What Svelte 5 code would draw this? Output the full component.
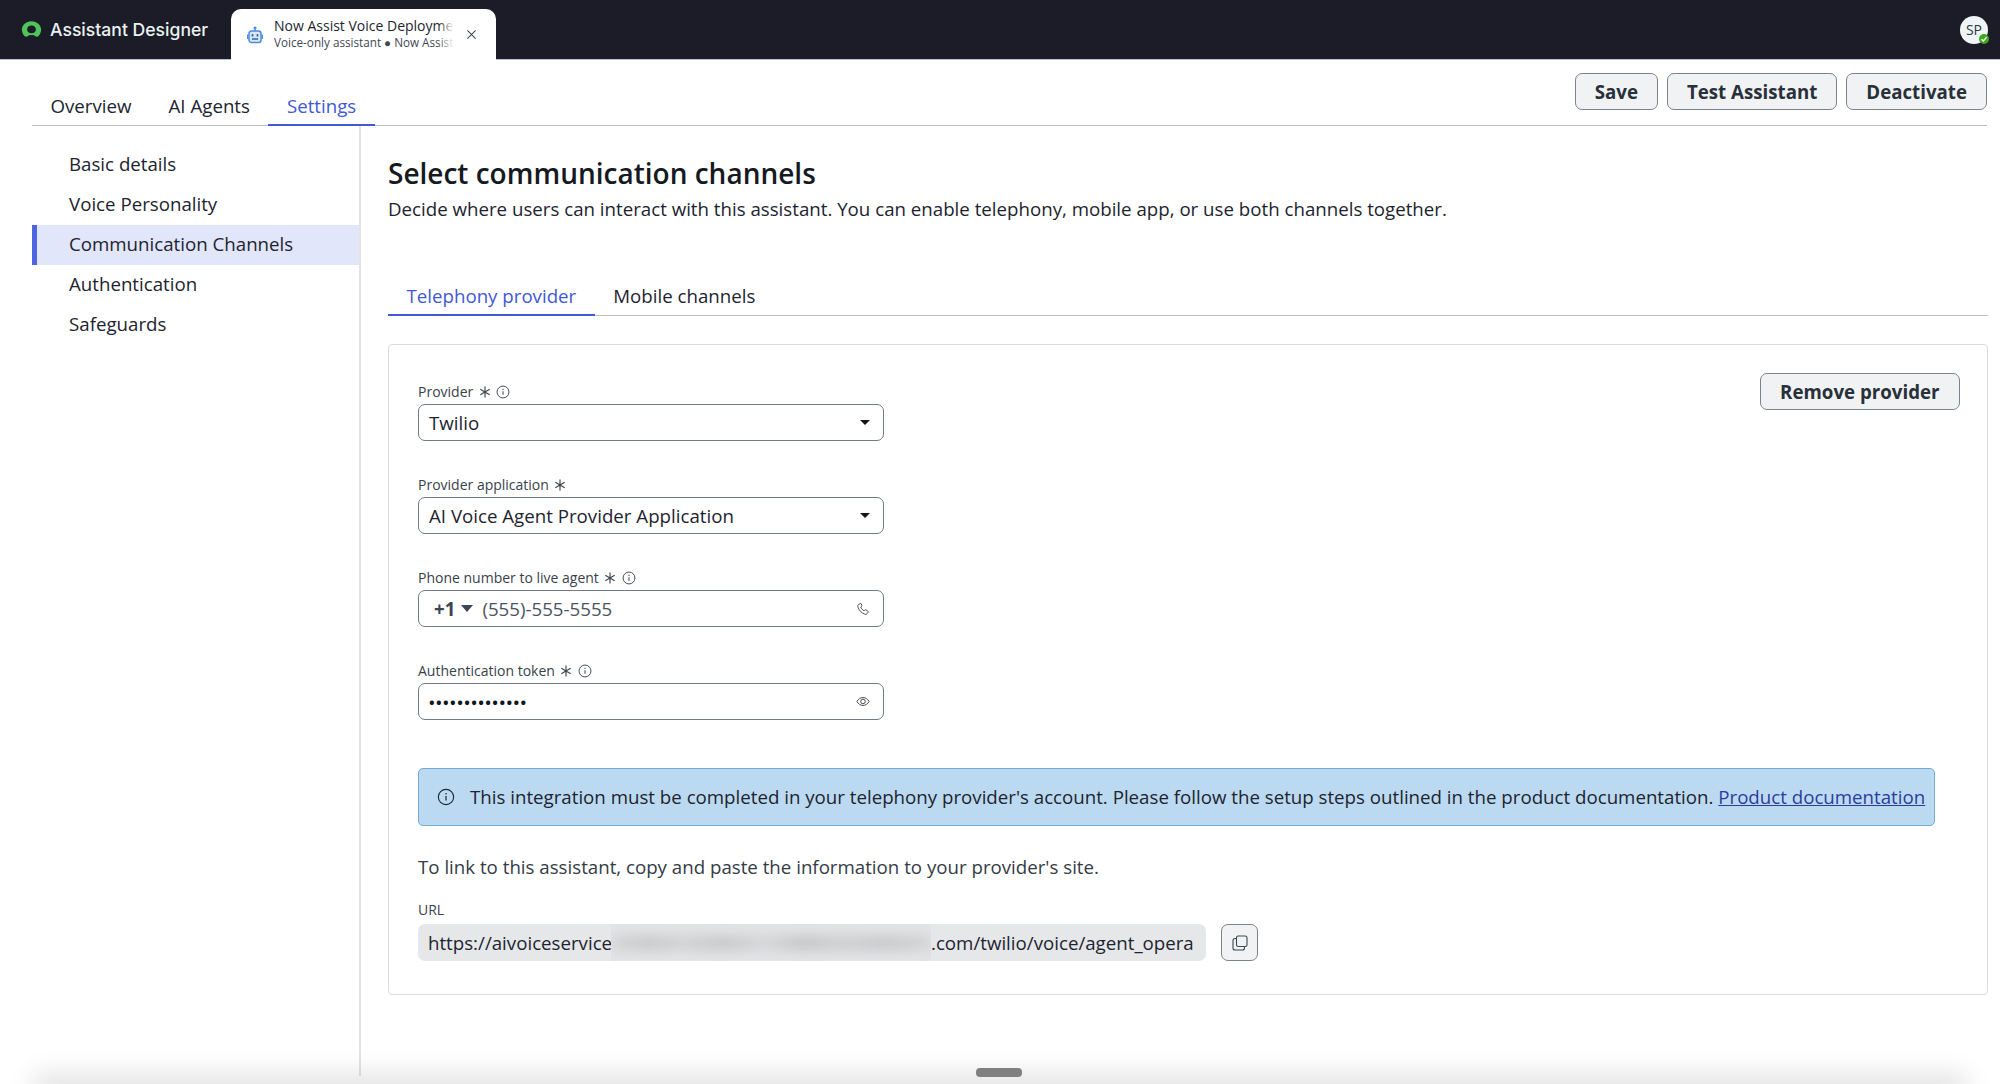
<script>
  const navItems = ['Basic details', 'Voice Personality', 'Communication Channels', 'Authentication', 'Safeguards'];
</script>

{#snippet star()}
  <svg class="req" viewBox="0 0 12 12"><path d="M6 .6v10.800M1.300 3.300l9.400 5.400M10.700 3.300l-9.400 5.400" fill="none" stroke="currentColor" stroke-width="1.150"/></svg>
{/snippet}
{#snippet info()}
  <svg class="info" viewBox="0 0 16 16"><circle cx="8" cy="8" r="6.800" fill="none" stroke="currentColor" stroke-width="1.100"/><path d="M8 7v4.200M8 4.400v1.300" stroke="currentColor" stroke-width="1.200"/></svg>
{/snippet}

<div class="page">
  <header class="topbar">
    <div class="brand">
      <svg class="logo" viewBox="0 0 24 24" width="21" height="19" preserveAspectRatio="none"><path fill="#52c25a" fill-rule="evenodd" d="M12 1.500C5.800 1.500 1 6.200 1 12.200c0 3.100 1.300 6.200 3.300 8.300.7.700 1.700.800 2.600.200 1.500-1.100 3.200-1.700 5.100-1.700s3.600.600 5.100 1.700c.8.600 1.900.500 2.600-.2 2-2.100 3.300-5.100 3.300-8.300C23 6.200 18.200 1.500 12 1.500zm0 15.300c-2.900 0-5-2.100-5-4.900S9.100 7 12 7s5 2.100 5 4.900-2.100 4.900-5 4.900z"/></svg>
      <span>Assistant Designer</span>
    </div>
    <div class="apptab">
      <svg class="bot" viewBox="0 0 18 20" width="16" height="18"><circle cx="9" cy="2" r="1.700" fill="#4a8be0"/><rect x="8.300" y="3" width="1.400" height="2.500" fill="#4a8be0"/><rect x="2.200" y="5.500" width="13.600" height="13" rx="3" fill="#d7e6fa" stroke="#4a8be0" stroke-width="1.700"/><rect x="5.200" y="8.800" width="2" height="3" rx=".8" fill="#35639f"/><rect x="10.800" y="8.800" width="2" height="3" rx=".8" fill="#35639f"/><rect x="5.500" y="13.600" width="7" height="1.800" rx=".6" fill="#35639f"/><rect x="0" y="9.500" width="1.300" height="5" fill="#4a8be0"/><rect x="16.700" y="9.500" width="1.300" height="5" fill="#4a8be0"/></svg>
      <div class="apptab-text">
        <div class="apptab-title">Now Assist Voice Deployment</div>
        <div class="apptab-sub">Voice-only assistant ● Now Assist Voice</div>
        <div class="fade"></div>
      </div>
      <svg class="close" viewBox="0 0 12 12" width="11" height="11"><path d="M1.500 1.500l9 9M10.500 1.500l-9 9" stroke="#3b4450" stroke-width="1.100" fill="none"/></svg>
    </div>
    <div class="spacer"></div>
    <div class="avatar">SP
      <span class="status"><svg viewBox="0 0 10 10" width="10" height="10"><path d="M2.500 5.200l1.800 1.800 3.300-3.700" fill="none" stroke="#fff" stroke-width="1.400"/></svg></span>
    </div>
  </header>

  <div class="subbar">
    <nav class="tabs top">
      <span class="tab">Overview</span>
      <span class="tab">AI Agents</span>
      <span class="tab active">Settings</span>
    </nav>
    <div class="actions">
      <button class="btn">Save</button>
      <button class="btn">Test Assistant</button>
      <button class="btn">Deactivate</button>
    </div>
  </div>

  <div class="body">
    <aside class="side">
      {#each navItems as item}
        <div class="side-item" class:on={item === 'Communication Channels'}>{item}</div>
      {/each}
    </aside>

    <main class="main">
      <h1>Select communication channels</h1>
      <p class="desc">Decide where users can interact with this assistant. You can enable telephony, mobile app, or use both channels together.</p>

      <nav class="tabs inner">
        <span class="tab active">Telephony provider</span>
        <span class="tab">Mobile channels</span>
      </nav>

      <section class="card">
        <div class="card-top">
          <div class="form">
            <div class="field">
              <div class="label">Provider {@render star()} {@render info()}</div>
              <div class="input">
                <span class="grow">Twilio</span>
                <span class="caret"></span>
              </div>
            </div>
            <div class="field">
              <div class="label">Provider application {@render star()}</div>
              <div class="input">
                <span class="grow">AI Voice Agent Provider Application</span>
                <span class="caret"></span>
              </div>
            </div>
            <div class="field">
              <div class="label">Phone number to live agent {@render star()} {@render info()}</div>
              <div class="input phone">
                <b>+1</b><span class="caret grey"></span>
                <span class="grow num">(555)-555-5555</span>
                <svg class="ico" viewBox="0 0 16 16" width="14" height="14"><path d="M4.800 1.800L3 2.800c-1 .7-1.200 2-.6 3.500 1.400 3.500 4 6.200 7.200 7.500 1.300.5 2.500.3 3.200-.6l1-1.500c.3-.4.200-.9-.2-1.200l-2.200-1.500c-.4-.3-.9-.2-1.200.1l-.8.900c-1.700-.7-3.200-2.200-4-4.100l.9-.7c.4-.3.500-.8.300-1.200L6 2.100c-.3-.4-.8-.5-1.200-.3z" fill="none" stroke="#3d4650" stroke-width="1.100"/></svg>
              </div>
            </div>
            <div class="field">
              <div class="label">Authentication token {@render star()} {@render info()}</div>
              <div class="input">
                <span class="grow dots">••••••••••••••</span>
                <svg class="ico" viewBox="0 0 16 12" width="14" height="11"><path d="M1 6c1.800-3 4.200-4.500 7-4.500S13.200 3 15 6c-1.800 3-4.200 4.500-7 4.500S2.800 9 1 6z" fill="none" stroke="#3d4650" stroke-width="1.100"/><circle cx="8" cy="6" r="2.600" fill="none" stroke="#3d4650" stroke-width="1.100"/></svg>
              </div>
            </div>
          </div>
          <button class="btn remove">Remove provider</button>
        </div>

        <div class="alert">
          <svg class="alert-ico" viewBox="0 0 16 16" width="18" height="18"><circle cx="8" cy="8" r="6.800" fill="none" stroke="#1f2730" stroke-width="1"/><path d="M8 7v4.200M8 4.400v1.300" stroke="#1f2730" stroke-width="1.100"/></svg>
          <span class="alert-text">This integration must be completed in your telephony provider's account. Please follow the setup steps outlined in the product documentation. <a href="#doc">Product documentation</a></span>
        </div>

        <p class="link-note">To link to this assistant, copy and paste the information to your provider's site.</p>

        <div class="label url-label">URL</div>
        <div class="url-row">
          <div class="url">
            <span class="url-a">https://aivoiceservice</span>
            <span class="redact"><span class="blur"></span></span>
            <span>.com/twilio/voice/agent_opera</span>
          </div>
          <button class="copy" aria-label="Copy">
            <svg viewBox="0 0 18 18" width="18" height="18"><rect x="5.500" y="2" width="10.500" height="10.500" rx="1.800" fill="none" stroke="#3d4650" stroke-width="1.100"/><path d="M5.500 4.500H4A2 2 0 0 0 2 6.500v7.500a2 2 0 0 0 2 2h7.500a2 2 0 0 0 2-2v-1.500" fill="none" stroke="#3d4650" stroke-width="1.100"/></svg>
          </button>
        </div>
      </section>
    </main>
  </div>

  <div class="bottom-shadow"></div>
  <span class="handle"></span>
</div>

<style>
  :global(body) { margin: 0; background: #fff; }
  .page {
    position: relative;
    width: 2000px;
    height: 1084px;
    overflow: hidden;
    font-family: "Open Sans", "Liberation Sans", sans-serif;
    color: #1a212b;
    background: #fff;
  }
  .topbar {
    height: 60px;
    box-sizing: border-box;
    background: #1b1c28;
    display: flex;
    align-items: flex-end;
    padding-left: 21px;
    padding-right: 12px;
    border-bottom: 1px solid #b4c6d4;
  }
  .brand {
    display: flex;
    align-items: center;
    gap: 8px;
    height: 59px;
    width: 210px;
    color: #e9f2f1;
    font-family: "Inter", "Noto Sans", sans-serif;
    font-size: 17.600px;
    font-weight: 500;
  }
  .logo { flex: none; }
  .apptab {
    width: 265px;
    height: 51px;
    margin-bottom: -1px;
    background: #fff;
    border-radius: 10px 10px 0 0;
    display: flex;
    align-items: center;
    padding-left: 16px;
    box-sizing: border-box;
  }
  .bot { flex: none; margin-right: 11px; }
  .apptab-text {
    width: 180px;
    overflow: hidden;
    white-space: nowrap;
    position: relative;
    margin-top: -2px;
    flex: none;
  }
  .apptab-title { font-size: 14px; line-height: 17px; color: #1e2530; }
  .apptab-sub { font-size: 11.700px; line-height: 16px; color: #3f4854; }
  .fade { position: absolute; top: 0; right: 0; bottom: 0; width: 16px; background: linear-gradient(to right, rgba(255,255,255,0), #fff); }
  .close { margin-left: 12px; flex: none; }
  .spacer { flex: 1; }
  .avatar {
    position: relative;
    align-self: center;
    width: 28px;
    height: 28px;
    border-radius: 50%;
    background: #f0f5f8;
    color: #2d3640;
    font-size: 14px;
    display: flex;
    align-items: center;
    justify-content: center;
  }
  .status {
    position: absolute;
    right: -1px;
    bottom: 0;
    width: 10px;
    height: 10px;
    border-radius: 50%;
    background: #3fa61f;
    display: flex;
  }

  .subbar {
    height: 66px;
    margin-left: 32px;
    margin-right: 13px;
    display: flex;
    justify-content: space-between;
    align-items: flex-start;
    box-sizing: border-box;
    border-bottom: 1px solid #b9bdc2;
  }
  .tabs { display: flex; }
  .tabs.top { height: 66px; align-items: flex-end; }
  .tab {
    display: block;
    box-sizing: border-box;
    padding: 0 18.500px;
    height: 38px;
    line-height: 36px;
    font-size: 18.700px;
    color: #1d2430;
    border-bottom: 2px solid transparent;
  }
  .tab.active { color: #4159d6; border-bottom-color: #4159d6; }
  .actions { display: flex; gap: 9px; padding-top: 13px; }
  .btn {
    height: 37px;
    padding: 0 19px;
    box-sizing: border-box;
    background: #f1f2f4;
    border: 1px solid #7b838c;
    border-radius: 7px;
    font-family: inherit;
    font-size: 18.700px;
    font-weight: 700;
    color: #283039;
  }
  .remove { margin-right: -1.500px; }

  .body { display: flex; height: 950px; margin-left: 32px; margin-right: 12px; }
  .side {
    width: 329px;
    flex: none;
    box-sizing: border-box;
    border-right: 2px solid #e2e4e7;
    padding-top: 19px;
  }
  .side-item {
    height: 40px;
    line-height: 37px;
    padding-left: 37px;
    font-size: 18.700px;
    color: #1d2430;
  }
  .side-item.on {
    background: #e1e6fa;
    border-left: 5px solid #4d65e0;
    padding-left: 32px;
  }
  .main { flex: 1; padding-left: 27px; min-width: 0; }
  h1 {
    margin: 28px 0 0;
    font-size: 28px;
    line-height: 38px;
    font-weight: 600;
    color: #151a22;
  }
  .desc {
    margin: 2px 0 0;
    font-size: 18.700px;
    line-height: 30px;
    color: #1d2430;
  }
  .tabs.inner { margin-top: 52px; border-bottom: 1px solid #b9bdc2; height: 40px; box-sizing: border-box; }
  .tabs.inner .tab { height: 40px; line-height: 39px; }
  .card {
    margin-top: 28px;
    height: 651px;
    box-sizing: border-box;
    border: 1px solid #d9dcdf;
    border-radius: 4px;
    padding: 28px 29px 0;
  }
  .card-top { display: flex; justify-content: space-between; align-items: flex-start; }
  .form { width: 466px; padding-top: 8.500px; }
  .field { margin-bottom: 34.300px; }
  .label {
    height: 20px;
    padding-bottom: 2px;
    line-height: 20px;
    font-size: 14px;
    color: #39424c;
    display: flex;
    align-items: center;
    gap: 5.500px;
  }
  .req { width: 12px; height: 12px; color: #3d4650; }
  .info { width: 14px; height: 14px; color: #3d4650; }
  .input {
    height: 37px;
    box-sizing: border-box;
    border: 1px solid #727a84;
    border-radius: 7px;
    display: flex;
    align-items: center;
    padding: 0 13px 0 10px;
    font-size: 18.700px;
    color: #1d2430;
  }
  .grow { flex: 1; white-space: nowrap; }
  .caret {
    width: 0;
    height: 0;
    border-left: 5px solid transparent;
    border-right: 5px solid transparent;
    border-top: 5.500px solid #11161d;
  }
  .caret.grey { border-left-width: 6px; border-right-width: 6px; border-top-width: 7px; border-top-color: #3d4650; margin-left: 6px; }
  .phone b { color: #3d4650; font-weight: 700; margin-left: 5px; }
  .num { margin-left: 9px; color: #4b535d; }
  .dots { font-size: 15px; letter-spacing: 1.400px; color: #11161d; font-weight: 700; }
  .alert {
    margin-top: 13.200px;
    height: 58px;
    width: 1517px;
    box-sizing: border-box;
    background: #bbdaf1;
    border: 1px solid #72aad4;
    border-radius: 5px;
    display: flex;
    align-items: center;
    padding-left: 18px;
    gap: 15px;
    font-size: 18.700px;
    white-space: nowrap;
    color: #1d2430;
  }
  .alert-text { margin-top: -1px; }
  .alert-ico { flex: none; }
  .alert a { color: #2b3c9e; text-decoration: underline; }
  .link-note { margin: 26.500px 0 0; font-size: 18.700px; line-height: 30px; color: #343c46; }
  .url-label { margin-top: 17.500px; margin-bottom: 2.500px; }
  .url-row { display: flex; gap: 15px; }
  .url {
    width: 788px;
    height: 37px;
    box-sizing: border-box;
    background: #e5e7e9;
    border-radius: 7px;
    display: flex;
    align-items: center;
    padding-left: 10px;
    font-size: 18.700px;
    color: #1d2430;
    white-space: nowrap;
    overflow: hidden;
  }
  .url-a { width: 183px; flex: none; }
  .redact {
    width: 320px;
    height: 37px;
    flex: none;
    overflow: hidden;
    display: flex;
    align-items: center;
    background: #e3e4e6;
  }
  .blur {
    display: block;
    width: 100%;
    height: 16px;
    filter: blur(6px);
    background: linear-gradient(to right, #d4d5d7 0%, #c9cacc 12%, #d2d3d5 22%, #c8c9cb 35%, #d6d7d9 48%, #c6c7c9 60%, #cfd0d2 72%, #c9cacc 86%, #d4d5d7 100%);
  }
  .copy {
    width: 37px;
    height: 37px;
    padding: 0;
    background: #f1f2f4;
    border: 1px solid #7b838c;
    border-radius: 7px;
    display: flex;
    align-items: center;
    justify-content: center;
  }
  .bottom-shadow {
    position: absolute;
    left: 40px;
    right: 40px;
    bottom: -12px;
    height: 12px;
    box-shadow: 0 -2px 28px 6px rgba(0, 0, 0, 0.14);
  }
  .handle {
    position: absolute;
    left: 976px;
    top: 1068px;
    width: 46px;
    height: 8.500px;
    border-radius: 4px;
    background: #808080;
  }
</style>
